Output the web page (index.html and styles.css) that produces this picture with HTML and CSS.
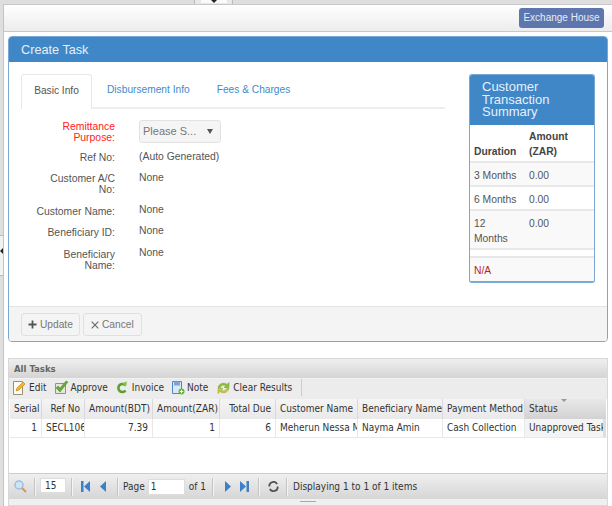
FILE: index.html
```html
<!DOCTYPE html>
<html lang="en">
<head>
    <meta charset="UTF-8">
    <title>Create Task</title>
    <link rel="stylesheet" href="styles.css">
</head>
<body>
    <div class="top-handle"><span><i></i></span></div>
    <div class="left-handle"><i></i></div>
    <div class="main">
        <div class="topbar">
            <a class="house-btn">Exchange House</a>
        </div>

        <div class="task-panel">
            <div class="task-title">Create Task</div>
            <div class="task-body">
                <div class="task-left">
                    <ul class="tabs">
                        <li class="active">Basic Info</li>
                        <li class="tab-second">Disbursement Info</li>
                        <li class="tab-third">Fees &amp; Charges</li>
                    </ul>
                    <div class="form">
                        <div class="row row-select">
                            <label class="required">Remittance Purpose:</label>
                            <div class="select"><span>Please S...</span><i></i></div>
                        </div>
                        <div class="row row-ref">
                            <label>Ref No:</label>
                            <div class="value">(Auto Generated)</div>
                        </div>
                        <div class="row row-ac">
                            <label>Customer A/C No:</label>
                            <div class="value">None</div>
                        </div>
                        <div class="row row-one">
                            <label>Customer Name:</label>
                            <div class="value">None</div>
                        </div>
                        <div class="row">
                            <label>Beneficiary ID:</label>
                            <div class="value">None</div>
                        </div>
                        <div class="row">
                            <label>Beneficiary Name:</label>
                            <div class="value">None</div>
                        </div>
                    </div>
                </div>
                <div class="summary">
                    <div class="summary-title">Customer Transaction Summary</div>
                    <table>
                        <tr class="head"><th class="c1">Duration</th><th>Amount (ZAR)</th></tr>
                        <tr><td class="c1">3 Months</td><td>0.00</td></tr>
                        <tr class="alt"><td class="c1">6 Months</td><td>0.00</td></tr>
                        <tr><td class="c1">12 Months</td><td>0.00</td></tr>
                        <tr class="blank"><td></td><td></td></tr>
                        <tr class="na"><td class="c1">N/A</td><td></td></tr>
                    </table>
                </div>
            </div>
            <div class="task-footer">
                <button class="btn btn-update">
                    <svg width="9" height="9" viewBox="0 0 9 9"><path d="M4.500 .5v8M.5 4.500h8" stroke="#555" stroke-width="1.800"/></svg>
                    Update
                </button>
                <button class="btn btn-cancel">
                    <svg width="8" height="8" viewBox="0 0 8 8"><path d="M.7.7l6.600 6.600M7.300.7l-6.600 6.600" stroke="#666" stroke-width="1.100"/></svg>
                    Cancel
                </button>
            </div>
        </div>

        <div class="grid-panel">
            <div class="grid-title">All Tasks</div>
            <div class="toolbar">
                <a class="tool tool-edit">
                    <svg width="13" height="16" viewBox="0 0 13 16"><path d="M.5 1.500h9v13h-9z" fill="#fdfdf6" stroke="#9a8f7a"/><path d="M3 11l1-3 6-6 2 2-6 6z" fill="#f2b632" stroke="#c8861a" stroke-width=".7"/></svg>
                    Edit
                </a>
                <a class="tool tool-approve">
                    <svg width="14" height="15" viewBox="0 0 14 15"><path d="M.5 3.500h10v10H.5z" fill="#e4e8d8" stroke="#8a9a78"/><path d="M1 8l4 4 8-10-2-1-6 7-2-2z" fill="#6aa83a" stroke="#4c8a26" stroke-width=".5"/></svg>
                    Approve
                </a>
                <a class="tool tool-invoice">
                    <svg width="11" height="13" viewBox="0 0 11 13"><path d="M8.500 4.500a4 4 0 1 0 0 5" fill="none" stroke="#5f9e32" stroke-width="2.600"/><path d="M5 2l5-1.500-1 5z" fill="#8bbf4e"/></svg>
                    Invoice
                </a>
                <a class="tool tool-note">
                    <svg width="13" height="15" viewBox="0 0 13 15"><path d="M.5 1.500h9v12h-9z" fill="#dbe8f5" stroke="#4f86c0"/><path d="M2 1.500h6v4H2z" fill="#7aa7d8"/><circle cx="9.500" cy="11.500" r="3" fill="#69b040"/><path d="M9.500 9.800v3.400M7.800 11.500h3.400" stroke="#fff"/></svg>
                    Note
                </a>
                <a class="tool tool-clear">
                    <svg width="14" height="14" viewBox="0 0 14 14"><path d="M1 6.500C2 2.500 7 1 10 3.500L12 1.500v5H7l2-1.800C7 3.500 4 4 3.500 6.500z" fill="#8fbf3e" stroke="#6b9a2a" stroke-width=".5"/><path d="M12 7.500C11 11.500 6 13 3 10.500L1 12.500v-5h5L4 9.300c2 1.200 5 .7 5.500-1.800z" fill="#d8c53a" stroke="#7fa02c" stroke-width=".5"/></svg>
                    Clear Results
                </a>
                <span class="tool-sep"></span>
            </div>
            <div class="grid-table">
                <div class="grid-head">
                    <div class="cell right">Serial</div>
                    <div class="cell right">Ref No</div>
                    <div class="cell right">Amount(BDT)</div>
                    <div class="cell right">Amount(ZAR)</div>
                    <div class="cell right">Total Due</div>
                    <div class="cell">Customer Name</div>
                    <div class="cell">Beneficiary Name</div>
                    <div class="cell">Payment Method</div>
                    <div class="cell sorted">Status<i class="sort-mark"></i></div>
                </div>
                <div class="grid-row">
                    <div class="cell right">1</div>
                    <div class="cell">SECL106</div>
                    <div class="cell right amount">7.39</div>
                    <div class="cell right">1</div>
                    <div class="cell right">6</div>
                    <div class="cell">Meherun Nessa M</div>
                    <div class="cell">Nayma Amin</div>
                    <div class="cell">Cash Collection</div>
                    <div class="cell status">Unapproved Task</div>
                </div>
                <div class="grid-empty"></div>
            </div>
            <div class="pager">
                <svg class="pg-search" width="13" height="13" viewBox="0 0 13 13"><circle cx="5" cy="5" r="4" fill="#cfe3f5" stroke="#9dbfdc" stroke-width="1.500"/><path d="M8 8l4 4" stroke="#d79a55" stroke-width="2.200"/></svg>
                <span class="pg-sep sep-a"></span>
                <input class="pg-size" value="15">
                <span class="pg-sep sep-b"></span>
                <svg class="pg-first" width="9" height="11" viewBox="0 0 9 11"><path d="M0 0h2.500v11H0zM9 0v11L3 5.500z" fill="#3b80c8"/></svg>
                <svg class="pg-prev" width="6" height="11" viewBox="0 0 6 11"><path d="M6 0v11L0 5.500z" fill="#3b80c8"/></svg>
                <span class="pg-sep sep-c"></span>
                <span class="pg-page">Page</span>
                <input class="pg-num" value="1">
                <span class="pg-of">of 1</span>
                <span class="pg-sep sep-d"></span>
                <svg class="pg-next" width="6" height="11" viewBox="0 0 6 11"><path d="M0 0v11l6-5.500z" fill="#3b80c8"/></svg>
                <svg class="pg-last" width="9" height="11" viewBox="0 0 9 11"><path d="M0 0v11l6-5.500zM6.500 0H9v11H6.500z" fill="#3b80c8"/></svg>
                <span class="pg-sep sep-e"></span>
                <svg class="pg-reload" width="11" height="11" viewBox="0 0 12 12"><path d="M10 3.500A4.500 4.500 0 0 0 1.500 6M2 8.500A4.500 4.500 0 0 0 10.500 6" fill="none" stroke="#555" stroke-width="2"/></svg>
                <span class="pg-sep sep-f"></span>
                <span class="pg-display">Displaying 1 to 1 of 1 items</span>
            </div>
            <div class="grid-bottom"><span></span></div>
        </div>
    </div>
</body>
</html>
```

FILE: styles.css
```css
html, body {
    margin: 0;
    padding: 0;
}
body {
    width: 612px;
    height: 506px;
    overflow: hidden;
    position: relative;
    background: #dedede;
    font-family: "Liberation Sans", Arial, sans-serif;
    font-size: 12px;
    color: #444;
}
.top-handle {
    position: absolute;
    left: 194px;
    top: 0;
    width: 39px;
    height: 4px;
    box-sizing: border-box;
    border-left: 1px solid #bbb;
    border-right: 1px solid #bbb;
    background: #e8e8e8;
}
.top-handle span {
    display: block;
    width: 26px;
    height: 3px;
    margin: 0 auto;
    background: #fafafa;
    position: relative;
}
.top-handle i {
    position: absolute;
    left: 10px;
    top: 0;
    border-left: 3px solid transparent;
    border-right: 3px solid transparent;
    border-top: 3px solid #222;
}
.left-handle {
    position: absolute;
    left: 0;
    top: 235px;
    width: 3px;
    height: 39px;
    background: #f2f2f2;
    border-top: 1px solid #bbb;
    border-bottom: 1px solid #bbb;
}
.left-handle i {
    position: absolute;
    left: 0;
    top: 12px;
    border-top: 3px solid transparent;
    border-bottom: 3px solid transparent;
    border-right: 3px solid #222;
}
.main {
    margin: 4px 0 0 3px;
    height: 502px;
    background: #fff;
    border-left: 1px solid #c4c4c4;
    border-top: 1px solid #c8c8c8;
    box-sizing: border-box;
}
.topbar {
    height: 27px;
    box-sizing: border-box;
    padding: 3px 8px 0 0;
    display: flex;
    justify-content: flex-end;
    align-items: flex-start;
    background: linear-gradient(#fff, #ececec);
    border-bottom: 1px solid #c8c8c8;
}
.house-btn {
    width: 85px;
    height: 20px;
    line-height: 19px;
    text-align: center;
    color: #e8ecf5;
    font-size: 10px;
    background: #5d76ad;
    border-radius: 3px;
}

/* Create Task */
.task-panel {
    margin: 4px 4px 0 4px;
    height: 306px;
    box-sizing: border-box;
    border: 1px solid #7aa7d3;
    border-radius: 4px;
    display: flex;
    flex-direction: column;
    background: #fff;
}
.task-title {
    height: 25px;
    line-height: 26px;
    padding-left: 12px;
    color: #e6f0fa;
    font-size: 12.7px;
    background: #3f87c7;
    border-radius: 3px 3px 0 0;
}
.task-body {
    flex: 1;
    display: flex;
    padding: 12px 12px 0 12px;
}
.task-left {
    width: 424px;
}
.tabs {
    list-style: none;
    margin: 0;
    padding: 0;
    height: 33px;
    display: flex;
    border-bottom: 2px solid #eee;
    font-size: 10.2px;
    color: #428bca;
}
.tabs li {
    line-height: 32px;
    height: 33px;
    box-sizing: border-box;
}
.tabs .active {
    width: 71px;
    text-align: center;
    color: #555;
    background: #fff;
    border: 1px solid #e8e8e8;
    border-bottom: 0;
    border-radius: 3px 3px 0 0;
    height: 35px;
}
.tabs .tab-second {
    margin-left: 15px;
}
.tabs .tab-third {
    margin-left: 27px;
}
.form {
    font-size: 10.4px;
    padding-top: 11px;
}
.row {
    display: flex;
    line-height: 11px;
    margin-bottom: 11px;
}
.row label {
    width: 82px;
    margin-left: 12px;
    text-align: right;
    color: #555;
    flex: none;
}
.row .required {
    color: #f22;
}
.row .value {
    margin-left: 24px;
    margin-top: -2px;
    color: #555;
}
.row-select {
    height: 24px;
    margin-bottom: 4px;
    padding-top: 1px;
}
.row-ref {
    padding-top: 3px;
    margin-bottom: 10px;
}
.row-ref .value {
    margin-top: -1px;
}
.row-ac .value {
    margin-top: -1px;
}
.row-one {
    margin-bottom: 10px;
}
.select {
    margin: -1px 0 0 24px;
    width: 82px;
    height: 23px;
    box-sizing: border-box;
    border: 1px solid #e2e2e2;
    border-radius: 3px;
    background: #f5f5f5;
    display: flex;
    align-items: center;
    justify-content: space-between;
    padding: 0 7px 0 3px;
    font-size: 11px;
    color: #777;
}
.select i {
    width: 0;
    height: 0;
    border-left: 3px solid transparent;
    border-right: 3px solid transparent;
    border-top: 5px solid #555;
}

/* summary box */
.summary {
    margin-left: 24px;
    width: 126px;
    height: 209px;
    box-sizing: border-box;
    border: 1px solid #7aa7d3;
    border-bottom-width: 2px;
    border-radius: 3px;
    font-size: 10.3px;
    overflow: hidden;
}
.summary-title {
    height: 50px;
    box-sizing: border-box;
    padding: 6px 30px 0 12px;
    line-height: 12.5px;
    font-size: 13px;
    color: #e6f0fa;
    background: #3f87c7;
}
.summary table {
    width: 100%;
    border-collapse: collapse;
    table-layout: fixed;
}
.summary th {
    text-align: left;
    vertical-align: bottom;
    color: #444;
    padding: 4px 4px 2px 0;
    line-height: 15px;
    border-bottom: 2px solid #e8e8e8;
}
.summary td {
    vertical-align: top;
    padding: 5px 4px 2px 0;
    line-height: 15px;
    color: #555;
    border-bottom: 2px solid #e8e8e8;
    background: #f9f9f9;
}
.summary .c1 {
    width: 47px;
    padding-left: 4px;
    padding-right: 8px;
}
.summary .alt td {
    background: #fff;
}
.summary .blank td {
    height: 6px;
    padding: 0;
    background: #fff;
}
.summary .na td {
    border-bottom: 0;
    color: #b22;
    padding-top: 5px;
    height: 17px;
}

.task-footer {
    height: 35px;
    box-sizing: border-box;
    border-top: 1px solid #e4e4e4;
    background: #f4f4f4;
    border-radius: 0 0 3px 3px;
    padding: 6px 12px 0 12px;
    display: flex;
    gap: 3px;
    align-items: flex-start;
}
.btn {
    width: 59px;
    height: 23px;
    margin: 0;
    display: flex;
    align-items: center;
    gap: 3px;
    border: 1px solid #e0e0e0;
    border-radius: 3px;
    background: #f4f4f4;
    font-family: inherit;
    font-size: 10.2px;
    color: #777;
}
.btn-update {
    padding: 0 0 0 6px;
}
.btn-cancel {
    padding: 0 0 0 7px;
}

/* All Tasks */
.grid-panel {
    margin: 16px 4px 0 4px;
    width: 600px;
    box-sizing: border-box;
    border: 1px solid #d8d8d8;
    font-family: "DejaVu Sans Condensed", "DejaVu Sans", sans-serif;
    font-stretch: condensed;
    font-size: 10px;
    color: #333;
    background: #fff;
    height: 148px;
    display: flex;
    flex-direction: column;
}
.grid-title {
    height: 19px;
    line-height: 19px;
    padding-left: 5px;
    font-size: 9.5px;
    font-weight: bold;
    color: #666;
    background: linear-gradient(#efefef, #d4d4d4);
}
.toolbar {
    height: 21px;
    box-sizing: border-box;
    border-top: 1px solid #f2f2f2;
    background: #ececec;
    display: flex;
    align-items: center;
    padding: 0 0 3px 4px;
}
.tool {
    display: flex;
    align-items: center;
    gap: 3px;
    margin-right: 9px;
}
.tool-approve {
    gap: 1px;
}
.tool-invoice {
    gap: 4px;
}
.tool-note {
    margin-left: -1px;
    gap: 2px;
}
.tool-clear {
    gap: 2px;
}
.tool-sep {
    width: 1px;
    height: 17px;
    background: #ccc;
}
.grid-table {
    flex: 1;
    display: flex;
    flex-direction: column;
    margin-left: 1px;
    overflow: hidden;
}
.grid-head,
.grid-row {
    display: grid;
    grid-template-columns: 32px 43px 68px 67px 56px 82px 85px 82px 81px;
}
.grid-head {
    height: 20px;
}
.grid-head .cell {
    background: linear-gradient(#f4f4f4, #e9e9e9);
    border-right: 1px solid #d9d9d9;
    line-height: 19px;
}
.grid-head .sorted {
    position: relative;
    background: linear-gradient(#e8e8e8, #d2d2d2);
    border-right: 0;
}
.sort-mark {
    position: absolute;
    left: 36px;
    top: 0;
    border-left: 3px solid transparent;
    border-right: 3px solid transparent;
    border-top: 3px solid #999;
}
.grid-row {
    height: 18px;
    border-bottom: 1px solid #e8e8e8;
}
.grid-row .cell {
    border-right: 1px solid #e8e8e8;
    line-height: 17px;
}
.grid-row .status {
    background: #f4f4f4;
    border-right: 3px solid #ddd;
    padding-right: 0;
}
.cell {
    padding: 0 4px;
    box-sizing: border-box;
    white-space: nowrap;
    overflow: hidden;
}
.cell.right {
    text-align: right;
}
.grid-empty {
    flex: 1;
}
.pager {
    height: 26px;
    box-sizing: border-box;
    border-top: 1px solid #ccc;
    background: linear-gradient(#efefef, #d6d6d6);
    display: flex;
    align-items: center;
}
.pg-sep {
    width: 1px;
    height: 18px;
    background: #c4c4c4;
    border-right: 1px solid #f4f4f4;
}
.pg-search { margin-left: 5px; }
.sep-a { margin-left: 7px; }
.pg-size {
    width: 26px;
    height: 15px;
    box-sizing: border-box;
    margin: 0 0 2px 4px;
    padding: 0 0 0 4px;
    border: 1px solid #ddd;
    font: inherit;
    color: #333;
}
.sep-b { margin-left: 5px; }
.pg-first { margin-left: 8px; }
.pg-prev { margin-left: 10px; }
.sep-c { margin-left: 11px; }
.pg-page { margin-left: 4px; }
.pg-num {
    width: 37px;
    height: 16px;
    box-sizing: border-box;
    margin-left: 3px;
    padding: 0 0 0 2px;
    border: 1px solid #ddd;
    font: inherit;
    color: #333;
}
.pg-of { margin-left: 4px; }
.sep-d { margin-left: 6px; }
.pg-next { margin-left: 11px; }
.pg-last { margin-left: 9px; }
.sep-e { margin-left: 9px; }
.pg-reload { margin-left: 8px; }
.sep-f { margin-left: 7px; }
.pg-display { margin-left: 5px; }
.grid-bottom {
    height: 6px;
    background: #f0f0f0;
    display: flex;
    justify-content: center;
}
.grid-bottom span {
    width: 16px;
    height: 1px;
    margin-top: 2px;
    background: #aaa;
}
```
